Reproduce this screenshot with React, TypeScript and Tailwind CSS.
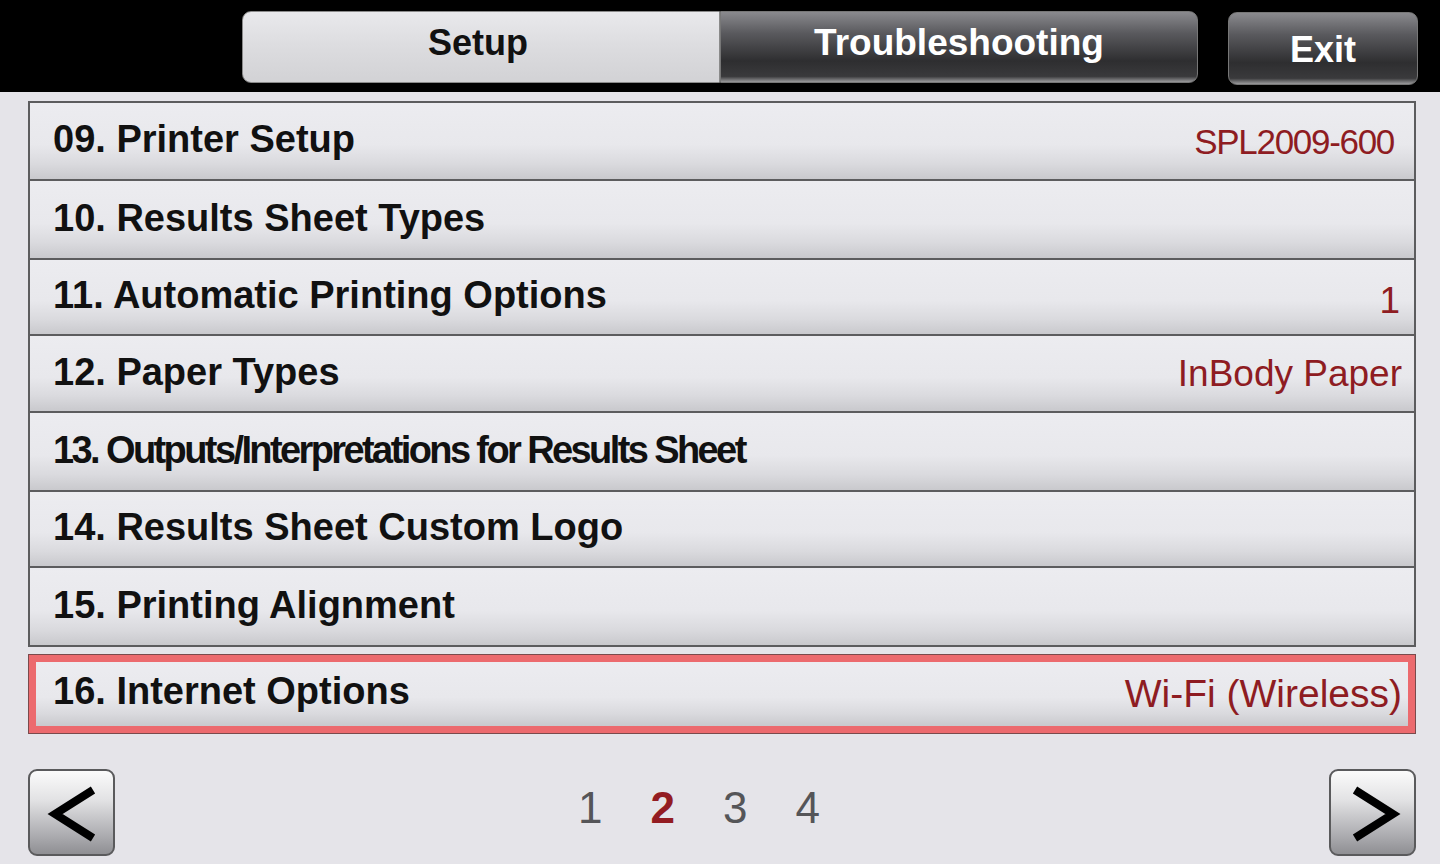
import React from "react";

const rows: { label: string; value?: string; h: number; condensed?: boolean; valueClass?: string }[] = [
  { label: "09. Printer Setup", value: "SPL2009-600", h: 78, valueClass: "text-[35px] tracking-[-1.3px] pr-[20px]" },
  { label: "10. Results Sheet Types", h: 79 },
  { label: "11. Automatic Printing Options", value: "1", h: 76, valueClass: "text-[37px] pr-[14px] pt-[6px]" },
  { label: "12. Paper Types", value: "InBody Paper", h: 77, valueClass: "text-[37px] pr-[12px]" },
  { label: "13. Outputs/Interpretations for Results Sheet", h: 79, condensed: true },
  { label: "14. Results Sheet Custom Logo", h: 76 },
  { label: "15. Printing Alignment", h: 79 },
];

const rowBg =
  "bg-[linear-gradient(to_bottom,#ececf0_0%,#e8e8ec_55%,#dadade_80%,#c9c9cd_100%)]";

function Chevron({ dir }: { dir: "left" | "right" }) {
  const pts = dir === "left" ? "63,19 25,43 63,67" : "24,19 62,43 24,67";
  return (
    <svg width="87" height="87" viewBox="0 0 87 87" className="absolute inset-0">
      <polyline points={pts} fill="none" stroke="#000" strokeWidth="8" strokeLinejoin="miter" strokeLinecap="butt" />
    </svg>
  );
}

export default function App() {
  return (
    <div
      className="w-[1440px] h-[864px] bg-[#e5e4e9] overflow-hidden"
      style={{ fontFamily: '"Liberation Sans", Arial, sans-serif' }}
    >
      {/* Top bar */}
      <div className="h-[92px] bg-black flex items-start pl-[242px] pt-[11px]">
        <div className="flex">
          <div className="w-[478px] h-[72px] rounded-l-[9px] border border-[#8a8a8a] bg-[linear-gradient(to_bottom,#e9e9ec_0%,#dcdcdf_50%,#d2d2d5_100%)] flex items-center justify-center">
            <span className="text-[36px] font-bold text-[#111] leading-none -mt-[8px] ml-[-6px]">Setup</span>
          </div>
          <div className="w-[478px] h-[72px] rounded-r-[9px] border border-[#777] bg-[linear-gradient(to_bottom,#8a8a8e_0%,#5a5a5e_30%,#2e2e30_70%,#3a3a3c_92%,#9a9a9c_100%)] flex items-center justify-center">
            <span className="text-[37px] font-bold text-white leading-none -mt-[10px]">Troubleshooting</span>
          </div>
        </div>
        <div className="ml-[30px] mt-[1px] w-[190px] h-[73px] rounded-[9px] border border-[#777] bg-[linear-gradient(to_bottom,#8a8a8e_0%,#5a5a5e_30%,#2e2e30_70%,#3a3a3c_92%,#9a9a9c_100%)] flex items-center justify-center">
          <span className="text-[36px] font-bold text-white leading-none mt-[2px]">Exit</span>
        </div>
      </div>

      {/* List */}
      <div className="ml-[28px] mt-[9px] w-[1388px] border-2 border-[#5c5c5e] flex flex-col">
        {rows.map((r, i) => (
          <div
            key={r.label}
            className={`flex items-center justify-between ${rowBg} ${i < rows.length - 1 ? "border-b-2 border-[#5c5c5e]" : ""}`}
            style={{ height: r.h - (i < rows.length - 1 ? 0 : 2) }}
          >
            <span
              className={`pl-[23px] text-[38px] font-bold text-[#111] leading-none whitespace-nowrap ${r.condensed ? "tracking-[-2.6px]" : ""} -mt-[4px]`}
            >
              {r.label}
            </span>
            {r.value && (
              <span className={`text-[#8e1c22] leading-none whitespace-nowrap ${r.valueClass}`}>{r.value}</span>
            )}
          </div>
        ))}
      </div>

      {/* Highlighted row */}
      <div className="ml-[28px] mt-[7px] w-[1388px] h-[80px] border border-[#7a4a4c] bg-[#ec6a6e] p-[7px]">
        <div className={`h-full flex items-center justify-between ${rowBg}`}>
          <span className="pl-[17px] text-[38px] font-bold text-[#111] leading-none whitespace-nowrap -mt-[6px]">
            16. Internet Options
          </span>
          <span className="pr-[6px] text-[39px] text-[#8e1c22] leading-none whitespace-nowrap -mt-[2px]">Wi-Fi (Wireless)</span>
        </div>
      </div>

      {/* Pager */}
      <div className="ml-[28px] mt-[35px] w-[1388px] flex items-center justify-between">
        <div className="relative w-[87px] h-[87px] rounded-[9px] border-2 border-[#5a5a5c] bg-[linear-gradient(to_bottom,#fbfbfb_0%,#e2e2e4_35%,#a9a9ad_80%,#8f8f93_100%)]">
          <Chevron dir="left" />
        </div>
        <div className="flex items-center gap-[48px] text-[44px] leading-none text-[#555558] mr-[46px] -mt-[10px]">
          <span>1</span>
          <span className="font-bold text-[#931c22]">2</span>
          <span>3</span>
          <span>4</span>
        </div>
        <div className="relative w-[87px] h-[87px] rounded-[9px] border-2 border-[#5a5a5c] bg-[linear-gradient(to_bottom,#fbfbfb_0%,#e2e2e4_35%,#a9a9ad_80%,#8f8f93_100%)]">
          <Chevron dir="right" />
        </div>
      </div>
    </div>
  );
}
